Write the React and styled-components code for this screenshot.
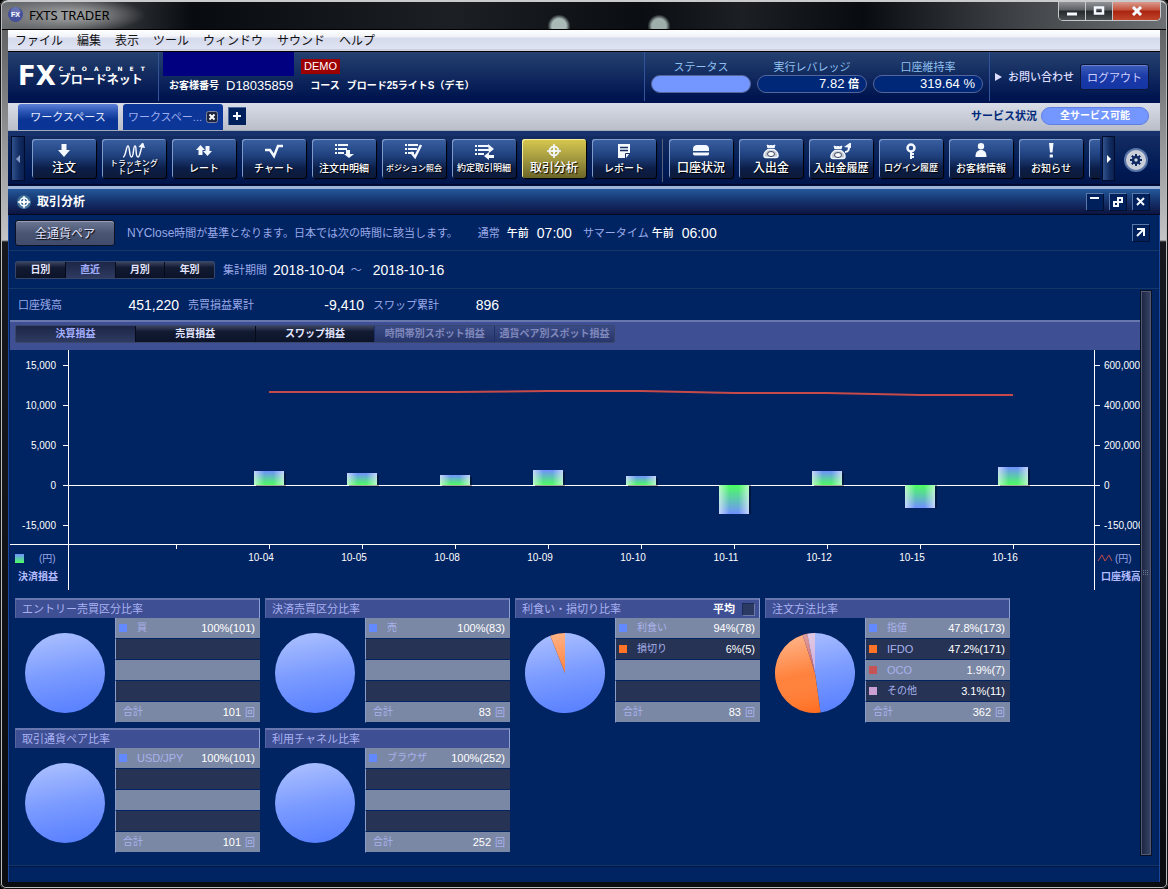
import React from 'react'
import styled, { createGlobalStyle, css } from 'styled-components'

const GlobalStyle = createGlobalStyle`
  * {
    box-sizing: border-box;
  }
  body {
    margin: 0;
    background: #000;
    color: #fff;
    font-family: "Liberation Sans", "Noto Sans CJK JP", sans-serif;
    font-size: 11px;
    line-height: 14px;
  }
  button, input {
    font-family: inherit;
    color: inherit;
    margin: 0;
    padding: 0;
    cursor: pointer;
  }
  h1, h2, p, dl, dd {
    margin: 0;
    font-size: inherit;
    font-weight: inherit;
  }
  svg {
    display: block;
    flex: none;
  }
`

/* ---------- window frame ---------- */

const Frame = styled.div`
  display: flex;
  flex-direction: column;
  min-height: 100vh;
  padding: 0 8px 7px;
  border-radius: 6px;
  box-shadow: inset 0 0 0 1px #111, inset 0 0 0 2px #b9bcbe;
  background: linear-gradient(#55585a 0, #6d6e70 60px, #c4c4c6 240px, #15191d 242px, #0a0c0f 100%);
`
const TitleBar = styled.header`
  display: flex;
  align-items: flex-start;
  height: 30px;
  margin: 0 -6px;
  padding-left: 6px;
  border-top: 2px solid #c9cbcc;
  border-bottom: 1px solid #000;
  border-radius: 6px 6px 0 0;
  background:
    radial-gradient(ellipse 12px 12px at 557px 24px, #a9bab7 60%, transparent 95%),
    radial-gradient(ellipse 12px 12px at 657px 24px, #9eaeab 60%, transparent 95%),
    radial-gradient(ellipse 76px 18px at 68px 13px, #999a9b 20%, transparent 100%),
    linear-gradient(90deg, #6d7073 0, #3f4245 90px, #080b10 190px, #1c2024 450px, #0a0d11 640px, #1c2025 740px, #080b0f 860px, #3a3e42 1000px, #6d7073 100%);
`
const AppTitle = styled.h1`
  flex: 1;
  padding: 4px 0 0 6px;
  color: #000;
  font-family: "Noto Sans", sans-serif;
  font-size: 13px;
  line-height: 18px;
`
const AppIcon = styled.svg`
  margin: 5px 0 0;
`
const WindowControls = styled.div`
  display: flex;
  margin-right: 5px;
  border: 1px solid #c4c7c9;
  border-top: 0;
  border-radius: 0 0 5px 5px;
  overflow: hidden;
`
const WindowButton = styled.button`
  display: flex;
  align-items: center;
  justify-content: center;
  width: ${(p) => (p.$close ? '47px' : '27px')};
  height: 18px;
  border: 0;
  border-right: ${(p) => (p.$close ? '0' : '1px solid #c4c7c9')};
  background: ${(p) =>
    p.$close
      ? 'linear-gradient(#d89a8e 0, #c4523b 45%, #a92410 50%, #c0452a 100%)'
      : 'linear-gradient(#909498 0, #5b5f63 45%, #25282b 50%, #4b4e52 100%)'};
`

const MenuBar = styled.nav`
  display: flex;
  align-items: center;
  gap: 14px;
  height: 21px;
  padding-left: 7px;
  background: linear-gradient(#fff 0, #f0f2f8 7px, #d5daec 8px, #dfe3f3 19px, #b9bccb 20px, #f2f2f2 21px);
`
const MenuItem = styled.button`
  border: 0;
  background: none;
  color: #111;
  font-size: 12px;
  line-height: 18px;
`

/* ---------- account header ---------- */

const Header = styled.div`
  display: flex;
  height: 52px;
  border-top: 1px solid #000;
  background: linear-gradient(#2b4779 0, #24406f 1px, #001650 44px, #001450 100%);
`
const Logo = styled.div`
  display: flex;
  gap: 3px;
  width: 151px;
  padding: 10px 0 0 10px;
  border-right: 1px solid #33549a;
  margin-bottom: 2px;
`
const LogoMark = styled.span`
  font-family: "DejaVu Sans", sans-serif;
  font-size: 26px;
  font-weight: 700;
  line-height: 28px;
`
const LogoName = styled.div`
  width: 86px;
  padding-top: 4px;
`
const LogoLatin = styled.div`
  display: flex;
  justify-content: space-between;
  font-family: "DejaVu Sans", sans-serif;
  font-size: 6px;
  font-weight: 700;
  line-height: 6px;
`
const LogoKana = styled.div`
  font-size: 12px;
  font-weight: 700;
  line-height: 17px;
  white-space: nowrap;
`
const Account = styled.div`
  flex: 1;
  padding-left: 4px;
`
const AccountTop = styled.div`
  display: flex;
  align-items: center;
  gap: 7px;
  height: 24px;
`
const NameMask = styled.div`
  width: 131px;
  height: 24px;
  background: #000080;
`
const DemoBadge = styled.span`
  padding: 0 3px;
  margin-top: 4px;
  background: #9c0000;
  font-size: 11px;
  line-height: 15px;
`
const AccountInfo = styled.dl`
  display: flex;
  align-items: center;
  padding: 2px 0 0 6px;
  line-height: 15px;
  dt {
    font-size: 10px;
    font-weight: 700;
    margin-right: 7px;
  }
  dd {
    font-size: 13px;
    margin-right: 17px;
  }
  dd + dt + dd {
    font-size: 10px;
    font-weight: 700;
  }
`
const HeaderGroup = styled.div`
  display: flex;
  align-items: flex-start;
  gap: 6px;
  margin-bottom: 2px;
  padding: 7px 6px 0;
  border-left: 1px solid #33549a;
`
const Gauge = styled.div`
  width: ${(p) => p.$width};
  color: #8fc0f0;
  text-align: center;
  line-height: 16px;
`
const Pill = styled.div`
  height: 18px;
  padding: 0 7px;
  border: 1px solid #56669a;
  border-radius: 9px;
  background: ${(p) => (p.$lit ? '#7396ff' : '#002878')};
  color: #fff;
  text-align: right;
  font-size: 13px;
  line-height: 16px;
  small {
    font-size: 11px;
    font-weight: 700;
  }
`
const ContactGroup = styled(HeaderGroup)`
  align-items: center;
  padding: 0 11px 0 5px;
`
const ContactLink = styled.a`
  display: flex;
  align-items: center;
  gap: 6px;
  color: #dcdcff;
  font-weight: 500;
  text-decoration: none;
`
const LogoutButton = styled.button`
  width: 69px;
  height: 26px;
  border: 1px solid #0c1638;
  border-radius: 3px;
  box-shadow: inset 0 1px 0 #6a83d0;
  background: linear-gradient(#3c5cb8 0, #1a3aa8 50%, #1435a5 100%);
  color: #d0d0ff;
  font-size: 11px;
`

/* ---------- workspace tabs ---------- */

const WorkspaceBar = styled.div`
  display: flex;
  align-items: flex-end;
  gap: 5px;
  height: 28px;
  padding: 0 11px 0 10px;
  border-bottom: 1px solid #a3aab8;
  background: linear-gradient(#d9dde8 0, #b9bec9 100%);
`
const WorkspaceTab = styled.button`
  display: flex;
  align-items: center;
  justify-content: center;
  gap: 4px;
  width: 100px;
  height: 26px;
  border: 0;
  border-radius: 3px 3px 0 0;
  font-size: 11px;
  line-height: 16px;
  background: ${(p) => (p.$active ? '#0c3799' : 'linear-gradient(#5c80d8 0, #2a55b4 30%, #0a3596 60%, #0a3596 100%)')};
  color: ${(p) => (p.$active ? '#9dadf0' : '#e6ebff')};
`
const AddTab = styled.button`
  display: flex;
  align-items: center;
  justify-content: center;
  width: 18px;
  height: 18px;
  margin-bottom: 5px;
  border: 0;
  box-shadow: inset 1px 1px 0 #4a6a9c;
  background: #00205c;
`
const ServiceStatus = styled.div`
  display: flex;
  align-items: center;
  gap: 4px;
  margin: 0 0 5px auto;
  color: #00297a;
  font-weight: 700;
`
const ServicePill = styled.span`
  width: 108px;
  border: 1px solid #5f7fe6;
  border-radius: 9px;
  background: #7396ff;
  color: #fff;
  text-align: center;
  font-size: 10px;
  line-height: 16px;
`

/* ---------- toolbar ---------- */

const Toolbar = styled.div`
  display: flex;
  height: 55px;
  padding: 0 3px;
  border-top: 5px solid #17316c;
  border-bottom: 2px solid #000c34;
  background: linear-gradient(#132c62 0, #001a55 70%, #00154a 100%);
`
const ScrollButton = styled.button`
  display: flex;
  align-items: center;
  justify-content: center;
  width: ${(p) => (p.$end ? '13px' : '14px')};
  height: 45px;
  border: 1px solid #000c2c;
  background: linear-gradient(90deg, #2f528c 0, #122c62 60%, #0a2050 100%);
`
const ToolList = styled.div`
  display: flex;
  flex: 1;
  gap: 6px;
  min-width: 0;
  margin: 0 2px 0 0;
  padding: 3px 0 0 7px;
  overflow: hidden;
`
const ToolDivider = styled.span`
  flex: none;
  width: 1px;
  height: 43px;
  background: #56627c;
`
const ToolButton = styled.button`
  display: flex;
  flex: none;
  flex-direction: column;
  align-items: center;
  width: 64px;
  height: 39px;
  border: 0;
  border-radius: 3px;
  padding-top: 4px;
  box-shadow: inset 1px 1px 0 ${(p) => (p.$active ? '#f5ec9c' : '#7f9bc9')}, 1px 1px 1px #000;
  background: ${(p) =>
    p.$active
      ? 'linear-gradient(#d8c850 0, #a39a40 50%, #6c6628 100%)'
      : 'linear-gradient(#3a60a2 0, #1e3f7c 45%, #0c1e48 75%, #0c1a38 100%)'};
  color: #fff;
  white-space: nowrap;
  font-weight: 500;
  font-size: ${(p) => p.$size || 10}px;
  line-height: ${(p) => (p.$double ? '8px' : '17px')};
  span {
    display: block;
    text-shadow: 1px 1px 1px #000;
    white-space: pre;
  }
`
const Settings = styled.div`
  display: flex;
  align-items: center;
  justify-content: center;
  width: 42px;
`
const GearButton = styled.button`
  width: 24px;
  height: 24px;
  border: 0;
  background: none;
`

/* ---------- analysis panel ---------- */

const Panel = styled.main`
  display: flex;
  flex: 1;
  flex-direction: column;
  border: solid #1848a0;
  border-width: 0 1px 0 1px;
  box-shadow: inset 1px 0 0 #001e58, inset -1px 0 0 #001e58;
  background: #002462;
`
const PanelTitle = styled.div`
  display: flex;
  align-items: center;
  gap: 6px;
  height: 29px;
  margin: 0 -1px;
  padding: 0 11px 0 9px;
  border-top: 3px solid #9fb5da;
  border-bottom: 1px solid #000824;
  background: linear-gradient(#235899 0, #15326c 50%, #0c1440 100%);
  h2 {
    flex: 1;
    font-size: 12px;
    font-weight: 700;
    line-height: 18px;
  }
`
const SmallButton = styled.button`
  display: flex;
  align-items: center;
  justify-content: center;
  width: 17px;
  height: 17px;
  border: 0;
  box-shadow: inset 1px 1px 0 #5a79a8, 1px 1px 0 #001030;
  background: #00205c;
`
const Row = styled.div`
  display: flex;
  align-items: center;
  height: ${(p) => p.$height};
  padding: 0 10px 0 6px;
  border-bottom: 1px solid #153768;
  color: #9ba8e8;
`
const PairButton = styled.button`
  width: 100px;
  height: 26px;
  margin-right: 12px;
  border: 1px solid #0c1224;
  border-radius: 3px;
  box-shadow: inset 0 1px 0 #97a0b8;
  background: linear-gradient(#6d7894 0, #4a5573 50%, #414c6c 100%);
  color: #e0e2ff;
  font-size: 12px;
  text-shadow: 1px 1px 1px #000;
`
const Note = styled.p`
  white-space: nowrap;
  margin-right: ${(p) => p.$gap || '7px'};
`
const Strong = styled.strong`
  margin-right: 8px;
  color: #fff;
  font-weight: 500;
`
const Figure = styled.span`
  color: #fff;
  font-size: 14px;
  line-height: 18px;
  margin-right: ${(p) => p.$gap || '0'};
`
const Spacer = styled.span`
  flex: 1;
`
const Latin = styled.span`
  font-size: ${(p) => p.$size || '11px'};
`

const Segments = styled.div`
  display: flex;
  width: ${(p) => p.$width};
  margin-right: 8px;
  border: 1px solid #39466a;
  border-radius: 2px;
  overflow: hidden;
`
const Segment = styled.button`
  flex: 1;
  height: 16px;
  border: 0;
  border-left: 1px solid #050a1c;
  background: linear-gradient(#3a4560 0, #121a32 35%, #0c142a 100%);
  color: #e4e6ff;
  font-size: 10px;
  font-weight: 700;
  line-height: 16px;
  white-space: nowrap;
  ${(p) =>
    p.$active &&
    css`
      background: linear-gradient(#1b2648 0, #2e3a60 100%);
      color: #a4aeff;
    `}
  &:first-child {
    border-left: 0;
  }
  &:disabled {
    border-left-color: #1f2f68;
    background: linear-gradient(#3a4a84 0, #27376c 100%);
    color: #8088bc;
    cursor: default;
  }
`

const Body = styled.div`
  display: flex;
  flex: 1;
  padding-right: 7px;
`
const Content = styled.div`
  flex: 1;
  min-width: 0;
  padding-left: 1px;
`
const Summary = styled.dl`
  display: flex;
  gap: 9px;
  height: 31px;
  align-items: center;
  padding-left: 8px;
  color: #9ba8e8;
`
const SummaryItem = styled.div`
  display: flex;
  justify-content: space-between;
  align-items: center;
  width: ${(p) => p.$width};
`
const ProfitTabs = styled.div`
  height: 30px;
  padding: 3px 0 0 5px;
  border-top: 2px solid #6878ae;
  background: #3e4f94;
`
const ChartSvg = styled.svg`
  width: 100%;
  height: auto;
  text {
    font-size: 10px;
    fill: #fff;
    stroke: none;
  }
  text.unit {
    fill: #9ba8e8;
  }
  text.series {
    fill: #b4bcff;
    font-weight: 700;
  }
`
const Scrollbar = styled.div`
  display: flex;
  align-items: center;
  justify-content: center;
  width: 12px;
  margin: 1px 0 9px;
  border: 1px solid #0a1024;
  box-shadow: inset 0 0 0 1px #505a74;
  background: linear-gradient(90deg, #1a2440 0, #3a4668 100%);
`
const Footer = styled.footer`
  height: 17px;
  border-top: 1px solid #153768;
  box-shadow: inset 0 1px 0 #001848;
`

/* ---------- ratio cards ---------- */

const Cards = styled.section`
  display: grid;
  grid-template-columns: repeat(auto-fill, 245px);
  gap: 5px;
  padding: 8px 0 11px 5px;
`
const CardTitle = styled.div`
  display: flex;
  align-items: center;
  justify-content: space-between;
  height: 20px;
  padding: 0 4px 0 6px;
  border-top: 2px solid #6878ae;
  border-right: 1px solid #8ea0d4;
  border-left: 1px solid #54659f;
  background: #3e4f94;
  color: #a9b1f2;
`
const AverageLabel = styled.label`
  display: flex;
  align-items: center;
  gap: 7px;
  color: #fff;
  font-weight: 700;
`
const AverageBox = styled.input`
  appearance: none;
  width: 13px;
  height: 13px;
  border: 1px solid #1c2a58;
  border-right-color: #6b78a8;
  border-bottom-color: #6b78a8;
  background: #2b3a62;
`
const CardBody = styled.div`
  display: flex;
  justify-content: space-between;
  align-items: flex-start;
`
const PieSvg = styled.svg`
  margin: 15px 0 0 10px;
`
const RatioTable = styled.table`
  width: 145px;
  border-collapse: separate;
  border-spacing: 0;
  tr:nth-child(odd) td {
    background: #7b88a5;
  }
  tr:nth-child(even) td {
    background: #263354;
  }
  td {
    height: 21px;
    padding: 0;
    border-bottom: 1px solid #002462;
    color: #a9b2ee;
    font-size: 10px;
    line-height: 14px;
    white-space: nowrap;
  }
  td:first-child {
    border-left: 1px solid #8c9cc8;
  }
  td:last-child {
    padding-right: 5px;
    color: #fff;
    font-size: 11px;
    text-align: right;
  }
  tr:last-child td:first-child {
    padding-left: 7px;
  }
`
const Swatch = styled.span`
  display: block;
  width: 8px;
  height: 8px;
  margin: 0 10px 0 3px;
  background: ${(p) => p.$color};
`
const LabelCell = styled.div`
  display: flex;
  align-items: center;
`
const Times = styled.span`
  margin-left: 4px;
  color: #a9b2ee;
  font-size: 10px;
`

/* ---------- icons ---------- */

const Icon = ({ children, width = 24, height = 17 }) => (
  <svg width={width} height={height} viewBox={`0 0 ${width} ${height}`} fill="none" stroke="#f4f8ff" strokeWidth="2" aria-hidden="true">
    {children}
  </svg>
)

const ListLines = () => (
  <path d="M3 2h2M6 2h10M3 6h2M6 6h9M3 10h2M6 10h6" />
)

const Bag = () => (
  <>
    <path d="M9 5l-1-3 3 1 1-1 1 1 3-1-1 3" fill="#f4f8ff" strokeWidth="1" />
    <path d="M9 6.500h6c3 2 4 4 4 6 0 1-1 2-2 2H7c-1 0-2-1-2-2 0-2 1-4 4-6z" fill="#c4c9d2" strokeWidth="1.500" />
    <ellipse cx="12" cy="11" rx="3.500" ry="2.500" fill="#fff" stroke="#3a4660" strokeWidth="1" />
  </>
)

const Crosshair = () => (
  <>
    <circle cx="12" cy="8" r="4.500" strokeWidth="1.800" />
    <path d="M12 1v14M5 8h14" strokeWidth="1.500" />
    <path d="M12 5.500v5M9.500 8h5" strokeWidth="2" />
  </>
)

const icons = {
  order: <path d="M9.500 1h5v6H18l-6 7-6-7h3.500z" fill="#f4f8ff" stroke="none" />,
  tracking: (
    <>
      <path d="M1 14C4 14 4 3 6 3s1 11 3.500 11S11 3 13 3s0 11 3 11c2 0 2-6 4-10" strokeWidth="1.500" />
      <path d="M16.500 4L21-1l2 6z" fill="#f4f8ff" stroke="none" />
    </>
  ),
  rate: (
    <path d="M8.500 2L13 7h-2.500v5h-4V7H4zM15.500 13L11 8h2.500V3h4v5H20z" fill="#f4f8ff" stroke="none" />
  ),
  chart: <path d="M3 7h5l4 6 4-10h5" strokeWidth="2.500" />,
  orders: (
    <>
      <ListLines />
      <path d="M14 7h4v4h4l-5 4-5-4h2z" fill="#f4f8ff" stroke="none" />
    </>
  ),
  positions: (
    <>
      <ListLines />
      <path d="M9 9l4 5 6-12" strokeWidth="2.500" />
    </>
  ),
  executions: (
    <>
      <path d="M3 3h2M6 3h11M3 7h2M6 7h11M3 11h2M6 11h6" />
      <path d="M16 1l6 5-5 4zM17 9v3h5v3h-5v2l-5-4z" fill="#f4f8ff" stroke="none" />
    </>
  ),
  analysis: <Crosshair />,
  report: (
    <>
      <path d="M6 1h12v9l-4 5H6z" fill="#f4f8ff" stroke="none" />
      <path d="M8 4.500h8M8 7.500h8" stroke="#17305f" strokeWidth="1.300" />
      <path d="M13.500 15v-4.500H18" stroke="#17305f" strokeWidth="1" />
    </>
  ),
  account: (
    <>
      <path d="M4 8V6c0-3 2-4 4-4h8c3 0 4 2 4 4v2z" fill="#f4f8ff" stroke="none" />
      <path d="M4 9.500h16v1c0 2-1 2-3 2H7c-2 0-3 0-3-2z" fill="#f4f8ff" stroke="none" />
    </>
  ),
  cash: <Bag />,
  cashHistory: (
    <>
      <g transform="translate(-3 1)"><Bag /></g>
      <path d="M16 9c4 0 4-3 4-6" strokeWidth="2" />
      <path d="M15 4l7-5v6z" fill="#f4f8ff" stroke="none" />
    </>
  ),
  login: (
    <>
      <circle cx="12" cy="5" r="3.500" strokeWidth="2.500" />
      <path d="M12 8v8M12 11h3M12 14h3" />
    </>
  ),
  customer: (
    <path d="M12 0a3.200 3.200 0 010 6.400A3.200 3.200 0 0112 0zM6.500 14c0-5 2-7 5.500-7s5.500 2 5.500 7z" fill="#f4f8ff" stroke="none" />
  ),
  news: <path d="M10 0h4.500l-1 9.500h-2.500zM10.700 11.500h3.200v3h-3.200z" fill="#f4f8ff" stroke="none" />,
}

/* ---------- data ---------- */

const menus = ['ファイル', '編集', '表示', 'ツール', 'ウィンドウ', 'サウンド', 'ヘルプ']

const tools = [
  { icon: 'order', label: '注文', size: 12 },
  { icon: 'tracking', label: 'トラッキング\nトレード', size: 8, double: true },
  { icon: 'rate', label: 'レート' },
  { icon: 'chart', label: 'チャート' },
  { icon: 'orders', label: '注文中明細' },
  { icon: 'positions', label: 'ポジション照会', size: 8 },
  { icon: 'executions', label: '約定取引明細', size: 9 },
  { icon: 'analysis', label: '取引分析', size: 12, active: true },
  { icon: 'report', label: 'レポート' },
  null,
  { icon: 'account', label: '口座状況', size: 12 },
  { icon: 'cash', label: '入出金', size: 12 },
  { icon: 'cashHistory', label: '入出金履歴', size: 11 },
  { icon: 'login', label: 'ログイン履歴', size: 9 },
  { icon: 'customer', label: 'お客様情報' },
  { icon: 'news', label: 'お知らせ' },
  { icon: null, label: '' },
]

const results = [
  { date: '10-04', bar: 14, line: 42 },
  { date: '10-05', bar: 12, line: 42 },
  { date: '10-08', bar: 10, line: 42 },
  { date: '10-09', bar: 15, line: 41 },
  { date: '10-10', bar: 9, line: 41 },
  { date: '10-11', bar: -29, line: 43 },
  { date: '10-12', bar: 14, line: 43 },
  { date: '10-15', bar: -23, line: 45 },
  { date: '10-16', bar: 18, line: 45 },
]

const BLUE = '#6389ff'
const ORANGE = '#ff7426'
const RED = '#c65356'
const PINK = '#caa0d2'

const ratios = [
  { title: 'エントリー売買区分比率', total: 101, rows: [['買', 100, 101, BLUE]] },
  { title: '決済売買区分比率', total: 83, rows: [['売', 100, 83, BLUE]] },
  { title: '利食い・損切り比率', total: 83, average: true, rows: [['利食い', 94, 78, BLUE], ['損切り', 6, 5, ORANGE]] },
  {
    title: '注文方法比率',
    total: 362,
    rows: [['指値', 47.8, 173, BLUE], ['IFDO', 47.2, 171, ORANGE], ['OCO', 1.9, 7, RED], ['その他', 3.1, 11, PINK]],
  },
  { title: '取引通貨ペア比率', total: 101, rows: [['USD/JPY', 100, 101, BLUE]] },
  { title: '利用チャネル比率', total: 252, rows: [['ブラウザ', 100, 252, BLUE]] },
]

/* ---------- components ---------- */

function Pie({ rows }) {
  const point = (share) => {
    const a = (share / 100) * Math.PI * 2
    return `${40 + 40 * Math.sin(a)} ${40 - 40 * Math.cos(a)}`
  }
  let start = 0
  const slices = rows.map(([label, share, , color]) => {
    const d =
      share === 100
        ? 'M40 0A40 40 0 0 1 40 80A40 40 0 0 1 40 0Z'
        : `M40 40L${point(start)}A40 40 0 ${share > 50 ? 1 : 0} 1 ${point(start + share)}Z`
    start += share
    return { label, color, d, shine: color === BLUE ? 'url(#shine)' : 'url(#shineWarm)' }
  })
  return (
    <PieSvg width="80" height="80" viewBox="0 0 80 80" aria-hidden="true">
      <defs>
        <linearGradient id="shine" gradientUnits="userSpaceOnUse" x1="32" y1="0" x2="48" y2="80">
          <stop offset="0" stopColor="#fff" stopOpacity="0.450" />
          <stop offset="0.500" stopColor="#fff" stopOpacity="0.150" />
          <stop offset="1" stopColor="#2050ff" stopOpacity="0.150" />
        </linearGradient>
        <linearGradient id="shineWarm" gradientUnits="userSpaceOnUse" x1="32" y1="0" x2="48" y2="80">
          <stop offset="0" stopColor="#fff" stopOpacity="0.450" />
          <stop offset="0.500" stopColor="#fff" stopOpacity="0.100" />
          <stop offset="1" stopColor="#ff5000" stopOpacity="0.300" />
        </linearGradient>
      </defs>
      {slices.map((s) => (
        <g key={s.label}>
          <path d={s.d} fill={s.color} />
          <path d={s.d} fill={s.shine} />
        </g>
      ))}
    </PieSvg>
  )
}

function RatioCard({ title, rows, total, average }) {
  const lines = [0, 1, 2, 3].map((i) => rows[i])
  return (
    <article>
      <CardTitle>
        <h2>{title}</h2>
        {average && (
          <AverageLabel>
            平均
            <AverageBox type="checkbox" />
          </AverageLabel>
        )}
      </CardTitle>
      <CardBody>
        <Pie rows={rows} />
        <RatioTable>
          <tbody>
            {lines.map((row, i) => (
              <tr key={i}>
                <td>
                  {row && (
                    <LabelCell>
                      <Swatch $color={row[3]} />
                      {/^[A-Z]/.test(row[0]) ? <Latin>{row[0]}</Latin> : row[0]}
                    </LabelCell>
                  )}
                </td>
                <td>{row && `${row[1]}%(${row[2]})`}</td>
              </tr>
            ))}
            <tr>
              <td>合計</td>
              <td>
                {total}
                <Times>回</Times>
              </td>
            </tr>
          </tbody>
        </RatioTable>
      </CardBody>
    </article>
  )
}

function ProfitChart() {
  const leftTicks = ['15,000', '10,000', '5,000', '0', '-15,000']
  const rightTicks = ['600,000', '400,000', '200,000', '0', '-150,000']
  const x = (i) => 259 + i * 93
  return (
    <ChartSvg viewBox="0 0 1130 240" role="img" aria-label="決算損益">
      <defs>
        <linearGradient id="barUp" x1="0" y1="0" x2="0" y2="1">
          <stop offset="0" stopColor="#7090ff" />
          <stop offset="1" stopColor="#4cff60" />
        </linearGradient>
        <linearGradient id="barDown" x1="0" y1="1" x2="0" y2="0">
          <stop offset="0" stopColor="#7090ff" />
          <stop offset="1" stopColor="#4cff60" />
        </linearGradient>
        <linearGradient id="barEdge">
          <stop offset="0" stopColor="#fff" stopOpacity="0.600" />
          <stop offset="0.350" stopColor="#fff" stopOpacity="0" />
          <stop offset="0.650" stopColor="#fff" stopOpacity="0" />
          <stop offset="1" stopColor="#fff" stopOpacity="0.600" />
        </linearGradient>
      </defs>
      <g stroke="#fff">
        <path d="M58.500 0V240M1084.500 0V240M0 194.500H1130M53 135.500H1090" />
        {leftTicks.map((t, i) => (
          <g key={t}>
            <path d={`M53 ${15.5 + i * 40}h5M1085 ${15.5 + i * 40}h5`} />
            <text x="46" y={19 + i * 40} textAnchor="end">{t}</text>
            <text x="1094" y={19 + i * 40}>{rightTicks[i]}</text>
          </g>
        ))}
        <path d="M166.500 194v5" />
        {results.map((r, i) => (
          <g key={r.date}>
            <path d={`M${x(i) + 0.5} 194v5`} />
            <text x={x(i) - 8} y="211" textAnchor="middle">{r.date}</text>
          </g>
        ))}
      </g>
      {results.map((r, i) => {
        const box = { x: x(i) - 15, y: r.bar > 0 ? 135 - r.bar : 135, width: 30, height: Math.abs(r.bar) }
        return (
          <g key={r.date}>
            <rect {...box} x={box.x + 2} y={r.bar > 0 ? box.y + 2 : box.y} fill="#000" opacity="0.350" />
            <rect {...box} fill={r.bar > 0 ? 'url(#barUp)' : 'url(#barDown)'} />
            <rect {...box} fill="url(#barEdge)" />
          </g>
        )
      })}
      <polyline points={results.map((r, i) => `${x(i)},${r.line}`).join(' ')} fill="none" stroke="#c64a4a" strokeWidth="2" />
      <rect x="5" y="204" width="9" height="9" fill="url(#barUp)" />
      <text className="unit" x="29" y="212">(円)</text>
      <text className="series" x="8" y="230">決済損益</text>
      <path d="M1088 211l4-6 3 6 4-6 3 6" fill="none" stroke="#c64a4a" />
      <text className="unit" x="1105" y="212">(円)</text>
      <text className="series" x="1091" y="230">口座残高</text>
    </ChartSvg>
  )
}

function TopBar() {
  return (
    <>
      <TitleBar>
        <AppIcon width="15" height="15" viewBox="0 0 15 15" aria-hidden="true">
          <circle cx="7.500" cy="7.500" r="7.500" fill="#45509a" />
          <circle cx="7.500" cy="5" r="5" fill="#7f8ac4" opacity="0.600" />
          <text x="7.500" y="10" fill="#fff" fontSize="7" fontWeight="700" textAnchor="middle">FX</text>
        </AppIcon>
        <AppTitle>FXTS TRADER</AppTitle>
        <WindowControls>
          <WindowButton aria-label="最小化">
            <Icon width={12} height={10}><path d="M1 8h10" strokeWidth="3" /></Icon>
          </WindowButton>
          <WindowButton aria-label="最大化">
            <Icon width={12} height={10}><path d="M2 1.500h8v6H2z" strokeWidth="2.500" /></Icon>
          </WindowButton>
          <WindowButton $close aria-label="閉じる">
            <Icon width={12} height={10}><path d="M2 1l8 8M10 1L2 9" strokeWidth="3" /></Icon>
          </WindowButton>
        </WindowControls>
      </TitleBar>
      <MenuBar>
        {menus.map((m) => (
          <MenuItem key={m}>{m}</MenuItem>
        ))}
      </MenuBar>
    </>
  )
}

function AccountHeader() {
  return (
    <Header>
      <Logo>
        <LogoMark>FX</LogoMark>
        <LogoName>
          <LogoLatin>
            {[...'CROADNET'].map((c) => (
              <span key={c}>{c}</span>
            ))}
          </LogoLatin>
          <LogoKana>ブロードネット</LogoKana>
        </LogoName>
      </Logo>
      <Account>
        <AccountTop>
          <NameMask />
          <DemoBadge>DEMO</DemoBadge>
        </AccountTop>
        <AccountInfo>
          <dt>お客様番号</dt>
          <dd>D18035859</dd>
          <dt>コース</dt>
          <dd>ブロード25ライトS（デモ）</dd>
        </AccountInfo>
      </Account>
      <HeaderGroup>
        <Gauge $width="100px">
          ステータス
          <Pill $lit />
        </Gauge>
        <Gauge $width="110px">
          実行レバレッジ
          <Pill>7.82 <small>倍</small></Pill>
        </Gauge>
        <Gauge $width="110px">
          口座維持率
          <Pill>319.64 %</Pill>
        </Gauge>
      </HeaderGroup>
      <ContactGroup>
        <ContactLink href="#contact">
          <svg width="7" height="8" viewBox="0 0 7 8" fill="#dcdcff" aria-hidden="true"><path d="M0 0l7 4-7 4z" /></svg>
          お問い合わせ
        </ContactLink>
        <LogoutButton>ログアウト</LogoutButton>
      </ContactGroup>
    </Header>
  )
}

function Workspaces() {
  return (
    <WorkspaceBar>
      <WorkspaceTab>ワークスペース</WorkspaceTab>
      <WorkspaceTab $active>
        ワークスペー...
        <svg width="12" height="12" viewBox="0 0 12 12" aria-hidden="true">
          <rect x="0.500" y="0.500" width="11" height="11" rx="2" fill="#1c2440" stroke="#7c86a0" />
          <path d="M3.500 3.500l5 5M8.500 3.500l-5 5" stroke="#fff" strokeWidth="2" />
        </svg>
      </WorkspaceTab>
      <AddTab aria-label="追加">
        <Icon width={8} height={8}><path d="M4 0v8M0 4h8" /></Icon>
      </AddTab>
      <ServiceStatus>
        サービス状況
        <ServicePill>全サービス可能</ServicePill>
      </ServiceStatus>
    </WorkspaceBar>
  )
}

function Tools() {
  return (
    <Toolbar>
      <ScrollButton aria-label="前へ">
        <svg width="4" height="8" viewBox="0 0 4 8" fill="#8b9cc4" aria-hidden="true"><path d="M4 0v8L0 4z" /></svg>
      </ScrollButton>
      <ToolList>
        {tools.map((t, i) =>
          t ? (
            <ToolButton key={i} $size={t.size} $active={t.active} $double={t.double}>
              {t.icon && <Icon>{icons[t.icon]}</Icon>}
              <span>{t.label}</span>
            </ToolButton>
          ) : (
            <ToolDivider key={i} />
          )
        )}
      </ToolList>
      <ScrollButton $end aria-label="次へ">
        <svg width="4" height="8" viewBox="0 0 4 8" fill="#fff" aria-hidden="true"><path d="M0 0v8l4-4z" /></svg>
      </ScrollButton>
      <Settings>
        <GearButton aria-label="設定">
          <svg width="24" height="24" viewBox="0 0 24 24" aria-hidden="true">
            <circle cx="12" cy="12" r="11" fill="#c9ced9" stroke="#5a76a8" strokeWidth="2" />
            <circle cx="12" cy="12" r="3" fill="none" stroke="#0d2a62" strokeWidth="2.500" />
            <path d="M12 6v3M12 15v3M6 12h3M15 12h3M7.800 7.800l2 2M14.200 14.200l2 2M16.200 7.800l-2 2M9.800 14.200l-2 2" stroke="#0d2a62" strokeWidth="2" />
          </svg>
        </GearButton>
      </Settings>
    </Toolbar>
  )
}

function App() {
  return (
    <Frame>
      <GlobalStyle />
      <TopBar />
      <AccountHeader />
      <Workspaces />
      <Tools />
      <Panel>
        <PanelTitle>
          <svg width="14" height="14" viewBox="4 0 16 16" fill="none" stroke="#fff" aria-hidden="true">
            <circle cx="12" cy="8" r="8" fill="#3f7098" stroke="none" />
            <Crosshair />
          </svg>
          <h2>取引分析</h2>
          <SmallButton aria-label="最小化">
            <Icon width={9} height={9}><path d="M0 1h9" /></Icon>
          </SmallButton>
          <SmallButton aria-label="元に戻す">
            <Icon width={10} height={10}><path d="M5 1h4v4H5zM1 5h4v4H1z" /></Icon>
          </SmallButton>
          <SmallButton aria-label="閉じる">
            <Icon width={9} height={9}><path d="M1 1l7 7M8 1L1 8" /></Icon>
          </SmallButton>
        </PanelTitle>
        <Row $height="36px">
          <PairButton>全通貨ペア</PairButton>
          <Note $gap="20px">
            <Latin $size="12px">NYClose</Latin>時間が基準となります。日本では次の時間に該当します。
          </Note>
          <Note>通常</Note>
          <Strong>午前</Strong>
          <Figure $gap="11px">07:00</Figure>
          <Note $gap="3px">サマータイム</Note>
          <Strong>午前</Strong>
          <Figure>06:00</Figure>
          <Spacer />
          <SmallButton aria-label="別ウィンドウで開く">
            <Icon width={9} height={9}><path d="M1 1h7v7M8 1L1 8" /></Icon>
          </SmallButton>
        </Row>
        <Row $height="38px">
          <Segments $width="200px">
            {['日別', '直近', '月別', '年別'].map((s) => (
              <Segment key={s} $active={s === '直近'}>{s}</Segment>
            ))}
          </Segments>
          <Note $gap="6px">集計期間</Note>
          <Figure $gap="6px">2018-10-04</Figure>
          <Note $gap="11px">～</Note>
          <Figure>2018-10-16</Figure>
        </Row>
        <Body>
          <Content>
            <Summary>
              <SummaryItem $width="161px">
                <dt>口座残高</dt>
                <dd><Figure>451,220</Figure></dd>
              </SummaryItem>
              <SummaryItem $width="176px">
                <dt>売買損益累計</dt>
                <dd><Figure>-9,410</Figure></dd>
              </SummaryItem>
              <SummaryItem $width="126px">
                <dt>スワップ累計</dt>
                <dd><Figure>896</Figure></dd>
              </SummaryItem>
            </Summary>
            <ProfitTabs>
              <Segments $width="600px">
                <Segment $active>決算損益</Segment>
                <Segment>売買損益</Segment>
                <Segment>スワップ損益</Segment>
                <Segment disabled>時間帯別スポット損益</Segment>
                <Segment disabled>通貨ペア別スポット損益</Segment>
              </Segments>
            </ProfitTabs>
            <ProfitChart />
            <Cards>
              {ratios.map((r) => (
                <RatioCard key={r.title} {...r} />
              ))}
            </Cards>
          </Content>
          <Scrollbar>
            <svg width="6" height="6" viewBox="0 0 6 6" fill="#6c7690" aria-hidden="true">
              <path d="M0 0h1v1H0zM2 0h1v1H2zM4 0h1v1H4zM0 2h1v1H0zM2 2h1v1H2zM4 2h1v1H4zM0 4h1v1H0zM2 4h1v1H2zM4 4h1v1H4z" />
            </svg>
          </Scrollbar>
        </Body>
        <Footer />
      </Panel>
    </Frame>
  )
}

export default App
